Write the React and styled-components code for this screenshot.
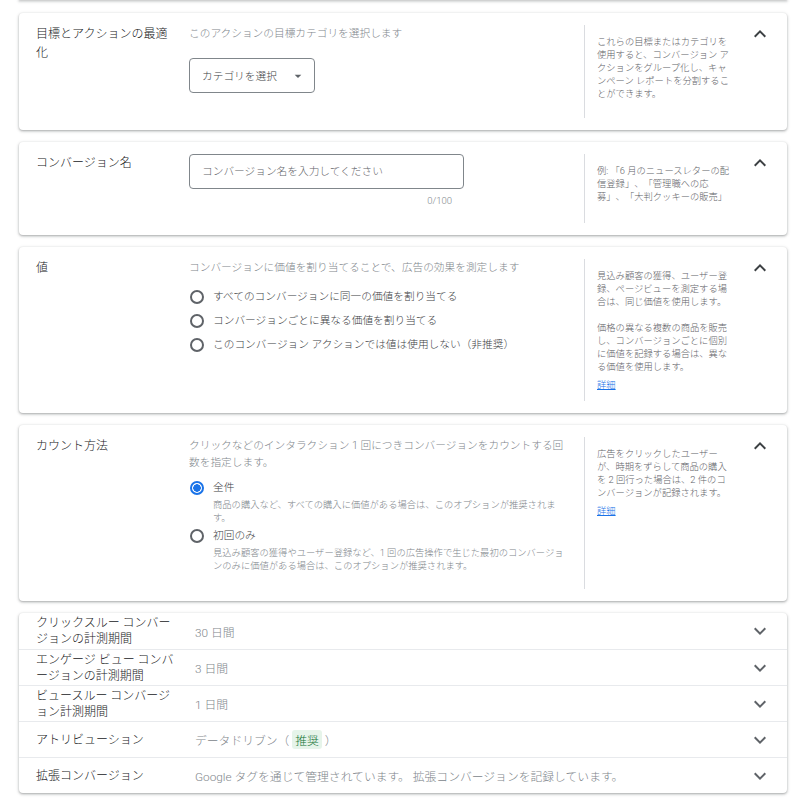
import styled, { createGlobalStyle } from "styled-components";

const GlobalStyle = createGlobalStyle`
  body {
    margin: 0;
    background: #fff;
    font-family: Roboto, "Noto Sans CJK JP", sans-serif;
    font-weight: 300;
    text-spacing-trim: space-all;
    color: #3c4043;
  }
`;

function ExpandIcon({ up }) {
  return (
    <svg width="24" height="24" viewBox="0 0 24 24">
      {up ? (
        <path d="M12 8l-6 6 1.41 1.41L12 10.83l4.59 4.58L18 14z" fill="#3c4043" />
      ) : (
        <path d="M16.59 8.59L12 13.17 7.41 8.59 6 10l6 6 6-6z" fill="#5f6368" />
      )}
    </svg>
  );
}

function Radio({ checked, label, hint }) {
  return (
    <RadioRow>
      <Circle $checked={checked} />
      <div>
        <RadioLabel>{label}</RadioLabel>
        {hint && <RadioHint>{hint}</RadioHint>}
      </div>
    </RadioRow>
  );
}

function CollapsedRows() {
  const rows = [
    { label: "クリックスルー コンバージョンの計測期間", value: "30 日間" },
    { label: "エンゲージ ビュー コンバージョンの計測期間", value: "3 日間" },
    { label: "ビュースルー コンバージョン計測期間", value: "1 日間" },
    {
      label: "アトリビューション",
      value: (
        <>
          データドリブン（ <Badge>推奨</Badge> ）
        </>
      ),
    },
    {
      label: "拡張コンバージョン",
      value: "Google タグを通じて管理されています。 拡張コンバージョンを記録しています。",
    },
  ];

  return (
    <Group>
      {rows.map((row) => (
        <Row key={row.label}>
          <RowLabel>{row.label}</RowLabel>
          <RowValue>{row.value}</RowValue>
          <RowToggle>
            <ExpandIcon />
          </RowToggle>
        </Row>
      ))}
    </Group>
  );
}

export default function App() {
  return (
    <Page lang="ja">
      <GlobalStyle />
      {/* bottom edge of the section scrolled above the viewport */}
      <PrevCardEdge />

      <Card>
        <Label>目標とアクションの最適化</Label>
        <Content $pb={37}>
          <Description>このアクションの目標カテゴリを選択します</Description>
          <Select>
            カテゴリを選択
            <svg width="16" height="16" viewBox="0 0 24 24">
              <path d="M7 10l5 5 5-5z" fill="#5f6368" />
            </svg>
          </Select>
        </Content>
        <Help>
          これらの目標またはカテゴリを使用すると、コンバージョン アクションをグループ化し、キャンペーン レポートを分割することができます。
        </Help>
        <Toggle>
          <ExpandIcon up />
        </Toggle>
      </Card>

      <Card>
        <Label>コンバージョン名</Label>
        <Content $pb={27}>
          <TextInput placeholder="コンバージョン名を入力してください" />
          <Counter>0/100</Counter>
        </Content>
        <Help>例: 「6 月のニュースレターの配信登録」、「管理職への応募」、「大判クッキーの販売」</Help>
        <Toggle>
          <ExpandIcon up />
        </Toggle>
      </Card>

      <Card>
        <Label>値</Label>
        <Content>
          <Description>コンバージョンに価値を割り当てることで、広告の効果を測定します</Description>
          <RadioList $top={11} $gap={4}>
            <Radio label="すべてのコンバージョンに同一の価値を割り当てる" />
            <Radio label="コンバージョンごとに異なる価値を割り当てる" />
            <Radio label="このコンバージョン アクションでは値は使用しない（非推奨）" />
          </RadioList>
        </Content>
        <Help>
          <p>見込み顧客の獲得、ユーザー登録、ページビューを測定する場合は、同じ価値を使用します。</p>
          <p>価格の異なる複数の商品を販売し、コンバージョンごとに個別に価値を記録する場合は、異なる価値を使用します。</p>
          <HelpLink href="#">詳細</HelpLink>
        </Help>
        <Toggle>
          <ExpandIcon up />
        </Toggle>
      </Card>

      <Card>
        <Label>カウント方法</Label>
        <Content $pb={29}>
          <Description>
            クリックなどのインタラクション 1 回につきコンバージョンをカウントする回数を指定します。
          </Description>
          <RadioList $top={7} $gap={2}>
            <Radio
              checked
              label="全件"
              hint="商品の購入など、すべての購入に価値がある場合は、このオプションが推奨されます。"
            />
            <Radio
              label="初回のみ"
              hint="見込み顧客の獲得やユーザー登録など、1 回の広告操作で生じた最初のコンバージョンのみに価値がある場合は、このオプションが推奨されます。"
            />
          </RadioList>
        </Content>
        <Help>
          <p>広告をクリックしたユーザーが、時期をずらして商品の購入を 2 回行った場合は、2 件のコンバージョンが記録されます。</p>
          <HelpLink href="#">詳細</HelpLink>
        </Help>
        <Toggle>
          <ExpandIcon up />
        </Toggle>
      </Card>

      <CollapsedRows />
    </Page>
  );
}

const Page = styled.div`
  display: flex;
  flex-direction: column;
  gap: 12px;
  padding: 0 8px 10px 19px;
`;

const PrevCardEdge = styled.div`
  height: 1px;
  margin-top: -1px;
  margin-bottom: 1px;
  background: #fff;
  box-shadow: 0 1px 2px 0 rgba(60, 64, 67, 0.3), 0 1px 3px 1px rgba(60, 64, 67, 0.15);
`;

const Card = styled.section`
  display: flex;
  align-items: stretch;
  padding-left: 17px;
  background: #fff;
  border-radius: 4px;
  box-shadow: 0 1px 2px 0 rgba(60, 64, 67, 0.3), 0 1px 3px 1px rgba(60, 64, 67, 0.15);
`;

const Label = styled.div`
  width: 137px;
  flex-shrink: 0;
  padding: 12px 16px 0 0;
  font-size: 12px;
  line-height: 19px;
  color: #202124;
`;

const Content = styled.div`
  flex: 1;
  min-width: 0;
  padding: 12px 14px ${(p) => p.$pb ?? 12}px 0;
`;

const Description = styled.div`
  font-size: 10.7px;
  line-height: 17px;
  color: #80868b;
`;

const Select = styled.div`
  display: flex;
  align-items: center;
  justify-content: space-between;
  box-sizing: border-box;
  width: 126px;
  height: 35px;
  margin-top: 16px;
  padding: 0 8px 0 12px;
  border: 1px solid #80868b;
  border-radius: 4px;
  font-size: 10.7px;
  color: #3c4043;
`;

const TextInput = styled.input`
  display: block;
  box-sizing: border-box;
  width: 275px;
  height: 35px;
  padding: 0 12px;
  border: 1px solid #80868b;
  border-radius: 4px;
  font: inherit;
  font-size: 10.7px;
  outline: none;

  &::placeholder {
    color: #5f6368;
  }
`;

const Counter = styled.div`
  width: 275px;
  box-sizing: border-box;
  margin-top: 5px;
  padding-right: 12px;
  text-align: right;
  font-size: 9.5px;
  line-height: 14px;
  color: #80868b;
`;

const RadioList = styled.div`
  display: flex;
  flex-direction: column;
  gap: ${(p) => p.$gap}px;
  margin: ${(p) => p.$top}px 4px 0 0;
`;

const RadioRow = styled.div`
  display: flex;
  align-items: flex-start;
  gap: 9px;
`;

const Circle = styled.span`
  flex-shrink: 0;
  box-sizing: border-box;
  width: 14px;
  height: 14px;
  margin: 3px 0 0 1px;
  border-radius: 50%;
  border: 2px solid ${(p) => (p.$checked ? "#1a73e8" : "#5f6368")};
  background: ${(p) => (p.$checked ? "radial-gradient(circle, #1a73e8 0 3.5px, #fff 4px)" : "#fff")};
`;

const RadioLabel = styled.div`
  font-size: 10.7px;
  line-height: 20px;
  color: #3c4043;
`;

const RadioHint = styled.div`
  font-size: 9.3px;
  line-height: 13px;
  color: #80868b;
`;

const Help = styled.aside`
  width: 135px;
  flex-shrink: 0;
  margin: 12px 0;
  padding: 10px 0 10px 12px;
  border-left: 1px solid #dadce0;
  font-size: 9.3px;
  line-height: 13px;
  color: #5f6368;

  & p {
    margin: 0 0 13px;
  }
  & p:last-of-type {
    margin-bottom: 5px;
  }
`;

const HelpLink = styled.a`
  color: #1a73e8;
  text-decoration: underline;
`;

const Toggle = styled.div`
  width: 55px;
  flex-shrink: 0;
  display: flex;
  justify-content: center;
  align-items: flex-start;
  padding-top: 9px;
`;

const Group = styled.section`
  background: #fff;
  border-radius: 4px;
  box-shadow: 0 1px 2px 0 rgba(60, 64, 67, 0.3), 0 1px 3px 1px rgba(60, 64, 67, 0.15);
`;

const Row = styled.div`
  display: flex;
  align-items: center;
  height: 36px;
  box-sizing: border-box;
  padding-left: 17px;

  & + & {
    border-top: 1px solid #e8eaed;
  }
`;

const RowLabel = styled.div`
  width: 140px;
  flex-shrink: 0;
  padding-right: 19px;
  font-size: 12px;
  line-height: 16px;
  line-break: anywhere;
  color: #202124;
`;

const RowValue = styled.div`
  flex: 1;
  font-size: 11.8px;
  color: #80868b;
`;

const Badge = styled.span`
  display: inline-block;
  padding: 1px 3px;
  border-radius: 3px;
  background: #e6f4ea;
  color: #137333;
`;

const RowToggle = styled.div`
  width: 55px;
  display: flex;
  justify-content: center;
`;
